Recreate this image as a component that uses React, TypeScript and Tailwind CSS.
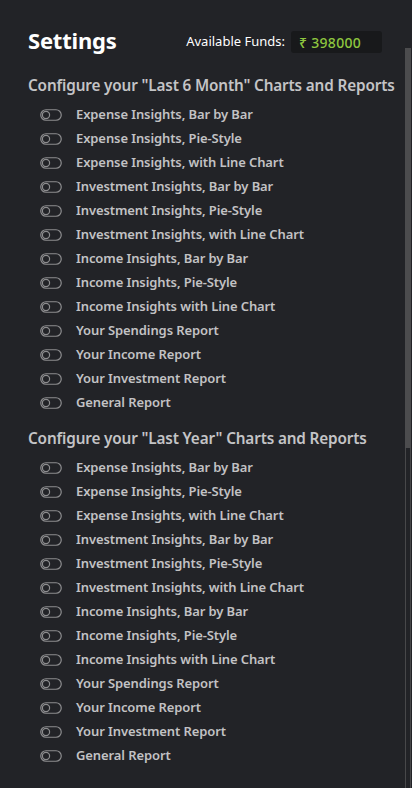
import React from 'react';

const items = [
  'Expense Insights, Bar by Bar',
  'Expense Insights, Pie-Style',
  'Expense Insights, with Line Chart',
  'Investment Insights, Bar by Bar',
  'Investment Insights, Pie-Style',
  'Investment Insights, with Line Chart',
  'Income Insights, Bar by Bar',
  'Income Insights, Pie-Style',
  'Income Insights with Line Chart',
  'Your Spendings Report',
  'Your Income Report',
  'Your Investment Report',
  'General Report',
];

const Toggle = () => (
  <svg width="22" height="12" viewBox="0 0 22 12" className="shrink-0">
    <rect x="0.75" y="0.75" width="20.5" height="10.5" rx="5.25" fill="none" stroke="#8d8d8f" strokeWidth="1.2" />
    <circle cx="6" cy="6" r="3.6" fill="none" stroke="#8d8d8f" strokeWidth="1.2" />
  </svg>
);

const Section = ({ title }: { title: string }) => (
  <div>
    <h2 className="text-[15.3px] tracking-[-0.15px] whitespace-nowrap font-semibold text-[#c4c4c6] leading-[22px]">
      {title}
    </h2>
    <ul className="mt-[7px] pl-[12px]">
      {items.map((label) => (
        <li key={label} className="flex items-center h-[24px] gap-[14px]">
          <Toggle />
          <span className="text-[13px] tracking-[-0.1px] font-semibold text-[#c2c2c4]">{label}</span>
        </li>
      ))}
    </ul>
  </div>
);

export default function App() {
  return (
    <div
      className="w-[412px] h-[788px] bg-[#222327] flex overflow-hidden"
      style={{ fontFamily: '"Noto Sans", "Open Sans", sans-serif' }}
    >
      <div className="flex-1 pl-[28px] pt-[24px]">
        <header className="flex items-center justify-between pr-[23px]">
          <h1 className="text-[22px] tracking-[-0.2px] font-bold text-white leading-[32px]">Settings</h1>
          <div className="flex items-center gap-[6px] mt-[4px]">
            <span className="text-[13px] text-white">Available Funds:</span>
            <div className="w-[91px] h-[22px] rounded-[3px] bg-[#18191b] flex items-center pl-[8px]">
              <span className="text-[14px] font-medium tracking-[0.3px] text-[#8ec63f]">₹ 398000</span>
            </div>
          </div>
        </header>
        <div className="mt-[18px] flex flex-col gap-[12px]">
          <Section title={'Configure your "Last 6 Month" Charts and Reports'} />
          <Section title={'Configure your "Last Year" Charts and Reports'} />
        </div>
      </div>
      <div className="w-[6px] mr-[1px] mt-[48px] flex flex-col">
        <div className="h-[400px] bg-[#4c4c4e]" />
        <div className="flex-1 border-x border-[#48484a]" />
      </div>
    </div>
  );
}
